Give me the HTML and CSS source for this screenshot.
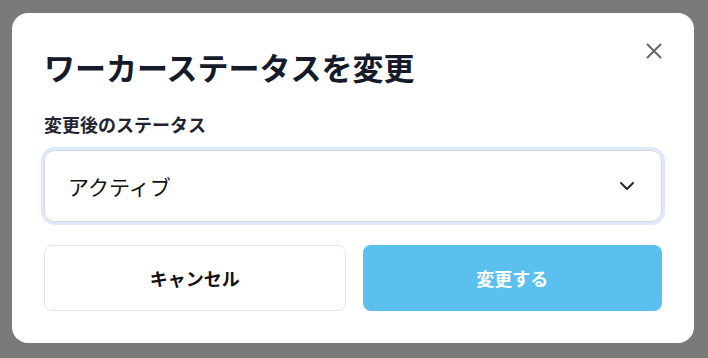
FILE: index.html
```html
<!doctype html>
<html>
<head>
    <meta charset="UTF-8">
    <link rel="stylesheet" href="styles.css">
</head>
<body>
<div class="modal">
    <button class="close-btn" aria-label="閉じる">
        <svg width="18" height="18" viewBox="0 0 18 18"><path d="M2.5 2.5L15.5 15.5M15.5 2.5L2.5 15.5" stroke="#666" stroke-width="2" stroke-linecap="round"/></svg>
    </button>
    <h1 class="modal-title">ワーカーステータスを変更</h1>
    <div class="field-label">変更後のステータス</div>
    <div class="select-box">
        <span class="select-value">アクティブ</span>
        <svg width="16" height="10" viewBox="0 0 16 10"><path d="M2 2L8 8L14 2" fill="none" stroke="#1f2430" stroke-width="2" stroke-linecap="round" stroke-linejoin="round"/></svg>
    </div>
    <div class="btn-row">
        <button class="btn btn-cancel">キャンセル</button>
        <button class="btn btn-submit">変更する</button>
    </div>
</div>
</body>
</html>
```

FILE: styles.css
```css
html, body {
    margin: 0;
    height: 100%;
}

body {
    background-color: #7a7a7a;
    font-family: "Noto Sans CJK JP", "Noto Sans", sans-serif;
    padding: 13px 14px 0 12px;
    box-sizing: border-box;
    overflow: hidden;
}

.modal {
    position: relative;
    background-color: #fff;
    border-radius: 16px;
    height: 330px;
    padding: 32px;
    box-sizing: border-box;
}

.close-btn {
    position: absolute;
    top: 29px;
    right: 31px;
    width: 18px;
    height: 18px;
    padding: 0;
    border: none;
    background: none;
}

.close-btn svg {
    display: block;
}

.modal-title {
    margin: 0;
    font-size: 31px;
    line-height: 44px;
    font-weight: 700;
    color: #151b28;
}

.field-label {
    margin-top: 23px;
    font-size: 18px;
    line-height: 24px;
    font-weight: 700;
    color: #1f2430;
}

.select-box {
    margin-top: 14px;
    height: 72px;
    box-sizing: border-box;
    border: 1px solid #d8d8d8;
    border-radius: 11px;
    box-shadow: 0 0 0 3px #dde8fa;
    display: flex;
    align-items: center;
    justify-content: space-between;
    padding: 0 26px 0 23px;
}

.select-value {
    font-size: 21px;
    color: #111;
}

.btn-row {
    margin-top: 23px;
    display: flex;
    gap: 17px;
}

.btn {
    flex: 1;
    height: 66px;
    border-radius: 8px;
    font-family: inherit;
    font-size: 18px;
    font-weight: 700;
}

.btn-cancel {
    background-color: #fff;
    border: 1px solid #e6e6e9;
    color: #111;
}

.btn-submit {
    background-color: #5bc0ee;
    border: none;
    color: #fff;
}
```
